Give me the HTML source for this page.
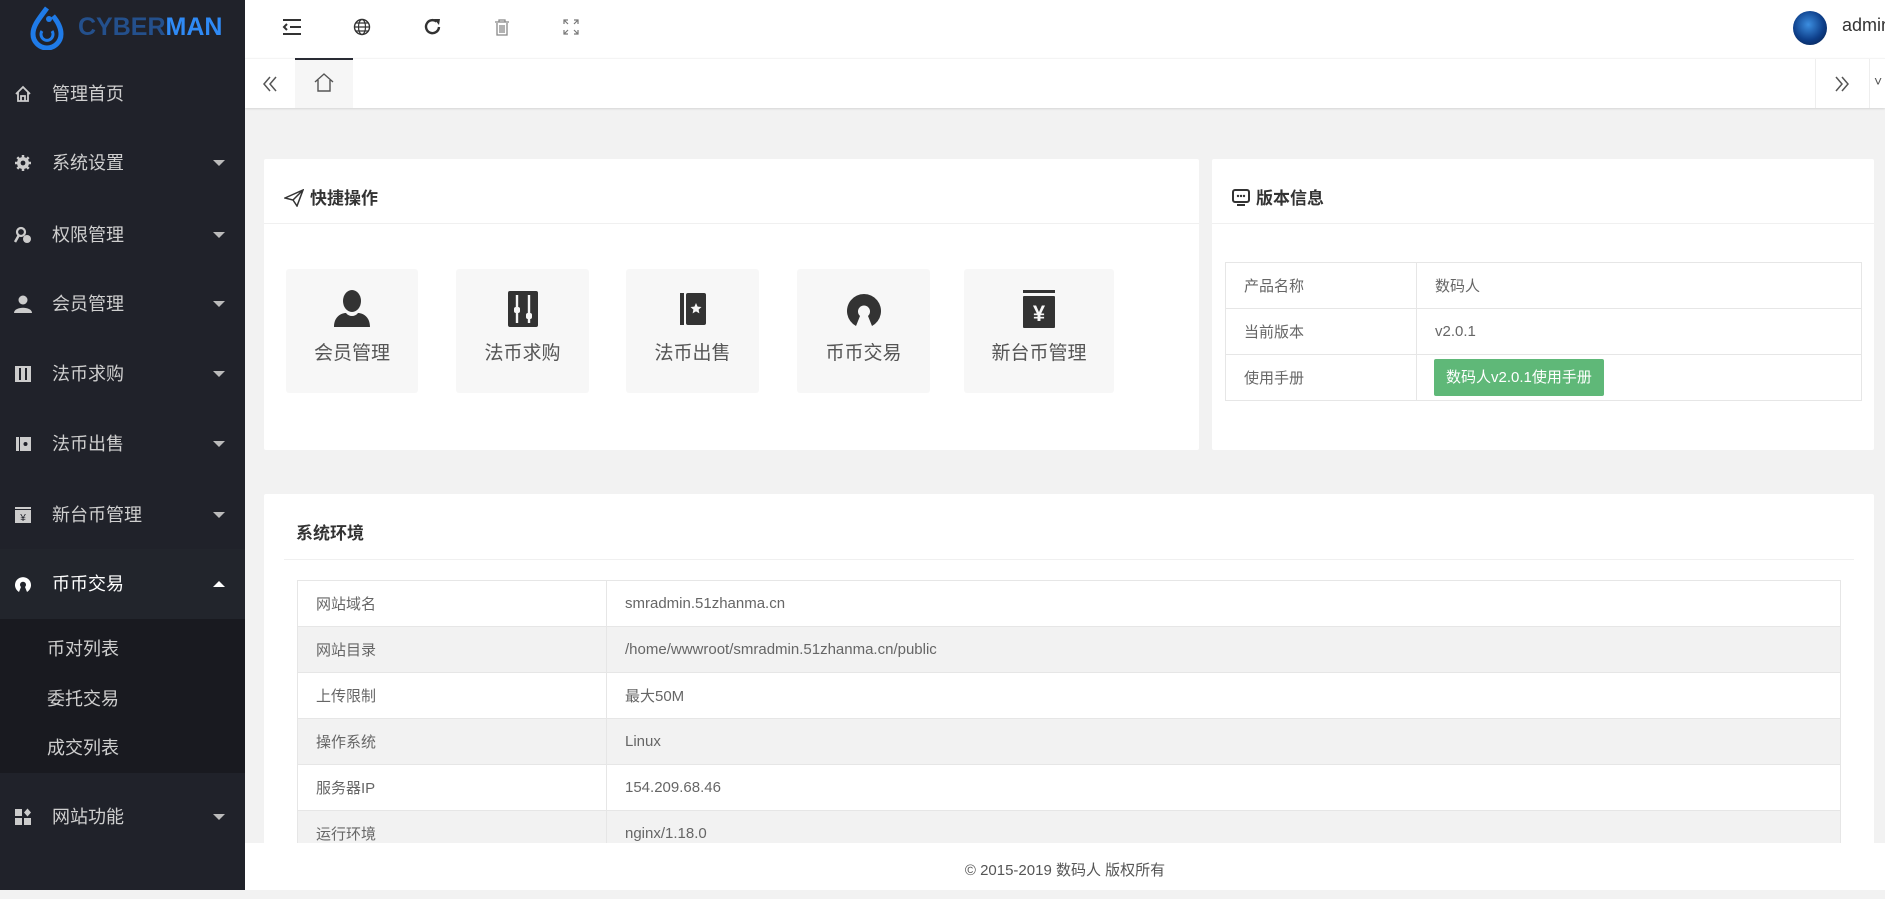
<!DOCTYPE html>
<html><head><meta charset="utf-8"><style>
*{margin:0;padding:0;box-sizing:border-box}
body{width:1885px;height:890px;overflow:hidden;background:#f2f2f2;font-family:"Liberation Sans","Noto Sans CJK SC",sans-serif;position:relative;color:#333}
.abs{position:absolute}
#side{left:0;top:0;width:245px;height:890px;background:#20222a}
.mi{position:absolute;left:0;width:245px;height:70px;color:#cfcfcf;font-size:18px;line-height:70px}
.mi .t{position:absolute;left:52px}
.mi .ic{position:absolute;left:14px;top:26px;width:18px;height:18px}
.mi .ar{position:absolute;left:213px;top:32px;width:0;height:0;border-left:6px solid transparent;border-right:6px solid transparent;border-top:6px solid #bbb}
.sub{position:absolute;left:0;width:245px;height:50px;line-height:50px;font-size:18px;color:#cfcfcf;padding-left:47px}
#hdr{left:245px;top:0;width:1640px;height:58px;background:#fff}
#tabs{left:245px;top:58px;width:1640px;height:50px;background:#fff;border-top:1px solid #f4f4f4;box-shadow:0 1px 2px rgba(0,0,0,.12)}
.card{position:absolute;background:#fff;border-radius:2px}
.ch{position:absolute;left:0;right:0;top:0;height:65px;border-bottom:1px solid #f0f0f0;font-size:17px;font-weight:bold;line-height:20px;padding-top:30px;padding-left:20px;color:#333}
table{border-collapse:collapse;position:absolute;font-size:15px;color:#666}
td{border:1px solid #e6e6e6;height:46px;padding-left:18px}
.tile{position:absolute;top:269px;height:124px;background:#f7f7f7;border-radius:3px;text-align:center;font-size:19px;color:#555}
.tile svg{position:absolute;left:50%;top:20px;margin-left:-20px}
.tile span{position:absolute;left:0;right:0;top:69px}
</style></head><body>
<div id="side" class="abs">
 <svg class="abs" style="left:30px;top:6px" width="34" height="44" viewBox="0 0 34 44"><path d="M17 2 C8 14 3 20 3 28 a14 14 0 0 0 28 0 C31 22 28 16 23 10" fill="none" stroke="#1f7be8" stroke-width="5"/><path d="M12 25 a6 6 0 1 0 10 0" fill="none" stroke="#1f7be8" stroke-width="3"/><circle cx="19" cy="13" r="3" fill="#1f7be8"/></svg>
 <div class="abs" style="left:78px;top:13px;font-size:25px;font-weight:bold"><span style="color:#24508c">CYBER</span><span style="color:#2f8af5">MAN</span></div>

 <div class="mi" style="top:59px"><svg class="ic" viewBox="0 0 18 18"><path d="M2 9 L9 2 L16 9 M4 7 V16 H14 V7 M7 16 V11 H11 V16" fill="none" stroke="#ccc" stroke-width="1.8"/></svg><span class="t">管理首页</span></div>
 <div class="mi" style="top:128px"><svg class="ic" viewBox="0 0 18 18"><circle cx="9" cy="9" r="6" fill="#ccc"/><circle cx="9" cy="9" r="2.4" fill="#20222a"/><path d="M9 1v4M9 13v4M1 9h4M13 9h4M3.3 3.3l3 3M11.7 11.7l3 3M3.3 14.7l3-3M11.7 6.3l3-3" stroke="#ccc" stroke-width="2.5"/></svg><span class="t">系统设置</span><i class="ar"></i></div>
 <div class="mi" style="top:200px"><svg class="ic" viewBox="0 0 18 18"><circle cx="7" cy="6" r="4" fill="none" stroke="#ccc" stroke-width="2.2"/><path d="M5 9 L1 16" stroke="#ccc" stroke-width="2.5"/><circle cx="13" cy="13" r="4" fill="#ccc"/></svg><span class="t">权限管理</span><i class="ar"></i></div>
 <div class="mi" style="top:269px"><svg class="ic" viewBox="0 0 18 18"><circle cx="9" cy="5" r="4.5" fill="#ccc"/><path d="M0 18 C0 11 18 11 18 18Z" fill="#ccc"/></svg><span class="t">会员管理</span><i class="ar"></i></div>
 <div class="mi" style="top:339px"><svg class="ic" viewBox="0 0 18 18"><rect x="1" y="1" width="16" height="16" fill="#ccc"/><path d="M6 3v12M12 3v12" stroke="#20222a" stroke-width="2"/></svg><span class="t">法币求购</span><i class="ar"></i></div>
 <div class="mi" style="top:409px"><svg class="ic" viewBox="0 0 18 18"><rect x="2" y="2" width="3" height="14" fill="#ccc"/><rect x="6" y="2" width="11" height="14" fill="#ccc"/><circle cx="11.5" cy="9" r="2" fill="#20222a"/></svg><span class="t">法币出售</span><i class="ar"></i></div>
 <div class="mi" style="top:480px"><svg class="ic" viewBox="0 0 18 18"><rect x="1" y="1" width="16" height="2" fill="#ccc"/><rect x="1" y="4" width="16" height="13" fill="#ccc"/><text x="9" y="15" font-size="10" text-anchor="middle" fill="#20222a">¥</text></svg><span class="t">新台币管理</span><i class="ar"></i></div>
 <div class="mi" style="top:549px;background:#22252c;color:#fff"><svg class="ic" viewBox="0 0 18 18"><path d="M5 17 A8 8 0 1 1 13 17 L11 12 A3 3 0 1 0 7 12Z" fill="#fff"/></svg><span class="t">币币交易</span><i class="ar" style="border-top:none;border-bottom:6px solid #fff"></i></div>
 <div class="abs" style="left:0;top:619px;width:245px;height:154px;background:#191a20"></div>
 <div class="sub" style="top:624px">币对列表</div>
 <div class="sub" style="top:674px">委托交易</div>
 <div class="sub" style="top:723px">成交列表</div>
 <div class="mi" style="top:782px"><svg class="ic" viewBox="0 0 18 18"><rect x="1" y="1" width="7" height="7" fill="#ccc"/><rect x="1" y="10" width="7" height="7" fill="#ccc"/><rect x="10" y="10" width="7" height="7" fill="#ccc"/><path d="M13.5 0.5 L17 4.5 L13.5 8.5 L10 4.5Z" fill="#ccc"/></svg><span class="t">网站功能</span><i class="ar"></i></div>
</div>

<div id="hdr" class="abs">
 <svg class="abs" style="left:37px;top:18px" width="20" height="18" viewBox="0 0 20 18"><path d="M1 2h18M8 9h11M1 16h18M5 6 L2 9 L5 12" fill="none" stroke="#333" stroke-width="2"/></svg>
 <svg class="abs" style="left:108px;top:18px" width="18" height="18" viewBox="0 0 18 18"><circle cx="9" cy="9" r="7.5" fill="none" stroke="#333" stroke-width="1.4"/><ellipse cx="9" cy="9" rx="3.5" ry="7.5" fill="none" stroke="#333" stroke-width="1.2"/><path d="M1.5 9h15M3 5h12M3 13h12" stroke="#333" stroke-width="1.2"/></svg>
 <svg class="abs" style="left:178px;top:17px" width="20" height="20" viewBox="0 0 20 20"><path d="M16 10 A6.5 6.5 0 1 1 13.5 4.5" fill="none" stroke="#333" stroke-width="2.4"/><path d="M11 2 L17 2 L16 8Z" fill="#333"/></svg>
 <svg class="abs" style="left:249px;top:19px" width="16" height="17" viewBox="0 0 16 17"><path d="M1 3h14M5 3V1h6v2M3 4v12h10V4M6 6v8M8 6v8M10 6v8" fill="none" stroke="#888" stroke-width="1.3"/></svg>
 <svg class="abs" style="left:318px;top:19px" width="16" height="16" viewBox="0 0 16 16"><path d="M1 5V1h4M1 1l4 4M11 1h4v4M15 1l-4 4M1 11v4h4M1 15l4-4M15 11v4h-4M15 15l-4-4" fill="none" stroke="#777" stroke-width="1.2"/></svg>
 <div class="abs" style="left:1548px;top:11px;width:34px;height:34px;border-radius:50%;background:radial-gradient(circle at 45% 40%,#3c8ee0,#0e3f8a 55%,#051a3f)"></div>
 <div class="abs" style="left:1597px;top:15px;font-size:18px;color:#333">admin</div>
</div>

<div id="tabs" class="abs">
 <svg class="abs" style="left:16px;top:16px" width="18" height="18" viewBox="0 0 18 18"><path d="M9 2 L3 9 L9 16 M15 2 L9 9 L15 16" fill="none" stroke="#555" stroke-width="1.5"/></svg>
 <div class="abs" style="left:50px;top:-1px;width:58px;height:50px;background:#f6f6f6;border-top:2px solid #292b34"></div>
 <svg class="abs" style="left:68px;top:13px" width="22" height="20" viewBox="0 0 22 20"><path d="M2 10 L11 2 L20 10 M5 8 V19 H17 V8" fill="none" stroke="#555" stroke-width="1.4"/></svg>
 <div class="abs" style="left:1570px;top:0;width:54px;height:49px;border-left:1px solid #eee"></div>
 <svg class="abs" style="left:1588px;top:16px" width="18" height="18" viewBox="0 0 18 18"><path d="M3 2 L9 9 L3 16 M9 2 L15 9 L9 16" fill="none" stroke="#555" stroke-width="1.5"/></svg>
 <div class="abs" style="left:1624px;top:0;width:16px;height:49px;border-left:1px solid #eee;font-size:14px;color:#555;padding:14px 0 0 4px">˅</div>
</div>

<div class="card" style="left:264px;top:159px;width:935px;height:291px">
 <div class="ch"><svg style="vertical-align:-3px;margin-right:6px" width="20" height="18" viewBox="0 0 20 18"><path d="M1 9 L19 1 L13 17 L9 11 Z M9 11 L19 1" fill="none" stroke="#333" stroke-width="1.5"/></svg>快捷操作</div>
</div>
<div class="tile" style="left:286px;width:132px"><svg width="40" height="40" viewBox="0 0 40 40"><ellipse cx="20" cy="12" rx="9" ry="11" fill="#333"/><path d="M2 38 C2 27 10 24 14 24 C17 28 23 28 26 24 C30 24 38 27 38 38Z" fill="#333"/></svg><span>会员管理</span></div>
<div class="tile" style="left:456px;width:133px"><svg width="40" height="40" viewBox="0 0 40 40"><rect x="5" y="2" width="30" height="36" rx="2" fill="#333"/><path d="M14 6v28M26 6v28" stroke="#f7f7f7" stroke-width="2.4"/><rect x="11" y="18" width="6" height="6" rx="2" fill="#f7f7f7"/><rect x="23" y="24" width="6" height="6" rx="2" fill="#f7f7f7"/></svg><span>法币求购</span></div>
<div class="tile" style="left:626px;width:133px"><svg width="40" height="40" viewBox="0 0 40 40"><rect x="7" y="4" width="4" height="32" fill="#333"/><rect x="13" y="4" width="20" height="32" rx="2" fill="#333"/><path d="M23 14 l1.6 3.6 3.9.4-2.9 2.6.8 3.8-3.4-2-3.4 2 .8-3.8-2.9-2.6 3.9-.4z" fill="#f7f7f7"/></svg><span>法币出售</span></div>
<div class="tile" style="left:797px;width:133px"><svg width="40" height="40" viewBox="0 0 40 40"><path d="M12 37 A17 17 0 1 1 28 37 L24 27 A6 6 0 1 0 16 27 Z" fill="#333"/></svg><span>币币交易</span></div>
<div class="tile" style="left:964px;width:150px"><svg width="40" height="40" viewBox="0 0 40 40"><rect x="4" y="1" width="32" height="3" fill="#333"/><rect x="4" y="7" width="32" height="32" rx="1" fill="#333"/><text x="20" y="32" font-size="22" font-weight="bold" text-anchor="middle" fill="#f7f7f7" font-family="Liberation Sans">¥</text></svg><span>新台币管理</span></div>

<div class="card" style="left:1212px;top:159px;width:662px;height:291px">
 <div class="ch"><svg style="vertical-align:-3px;margin-right:6px" width="18" height="18" viewBox="0 0 18 18"><rect x="1" y="1" width="16" height="12" rx="2" fill="none" stroke="#333" stroke-width="2"/><circle cx="6" cy="7" r="1.2" fill="#333"/><circle cx="9" cy="7" r="1.2" fill="#333"/><circle cx="12" cy="7" r="1.2" fill="#333"/><path d="M5 16h8" stroke="#333" stroke-width="2"/></svg>版本信息</div>
</div>
<table style="left:1225px;top:262px;width:637px">
 <tr><td style="width:191px">产品名称</td><td>数码人</td></tr>
 <tr><td>当前版本</td><td>v2.0.1</td></tr>
 <tr><td>使用手册</td><td style="padding-left:17px"><span style="display:inline-block;background:#5fb878;color:#fff;height:37px;line-height:37px;padding:0 12px;border-radius:2px;font-size:15px">数码人v2.0.1使用手册</span></td></tr>
</table>

<div class="card" style="left:264px;top:494px;width:1610px;height:360px">
 <div class="ch" style="left:20px;right:20px;height:66px;font-size:17px;padding-left:12px;padding-top:30px">系统环境</div>
</div>
<table style="left:297px;top:580px;width:1544px">
 <tr><td style="width:309px">网站域名</td><td>smradmin.51zhanma.cn</td></tr>
 <tr style="background:#f2f2f2"><td>网站目录</td><td>/home/wwwroot/smradmin.51zhanma.cn/public</td></tr>
 <tr><td>上传限制</td><td>最大50M</td></tr>
 <tr style="background:#f2f2f2"><td>操作系统</td><td>Linux</td></tr>
 <tr><td>服务器IP</td><td>154.209.68.46</td></tr>
 <tr style="background:#f2f2f2"><td>运行环境</td><td>nginx/1.18.0</td></tr>
</table>

<div class="abs" style="left:245px;top:843px;width:1640px;height:47px;background:#fff;text-align:center;line-height:56px;font-size:15px;color:#555">© 2015-2019 数码人 版权所有</div>
</body></html>
